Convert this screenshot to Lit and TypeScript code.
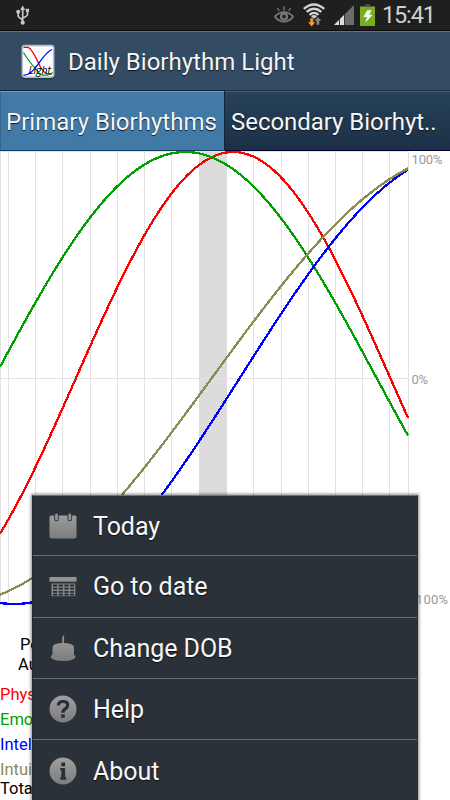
import { LitElement, html, svg, css } from "lit";
import { customElement, state } from "lit/decorators.js";
import { classMap } from "lit/directives/class-map.js";

const MIDDLE = 227;
const AMPLITUDE = 226;
const DAY = 27.33;
const END = 408.5;

interface Rhythm { color: string; days: number; zero: number; }

const RHYTHMS: Rhythm[] = [
  { color: "#ff0000", days: 23, zero: 76 },
  { color: "#00a000", days: 28, zero: -6 },
  { color: "#0000ff", days: 33, zero: 239.8 },
  { color: "#8c8c50", days: 38, zero: 211.8 },
];

const GRID = [0.5, 8.5, 35.5, 62.5, 90.5, 117.5, 144.5, 171.5, 253.5, 281.5, 308.5, 335.5, 362.5, 389.5, 408.5];

function curve(r: Rhythm): string {
  const pts: string[] = [];
  for (let x = 0; x <= END; x += 2) {
    const y = MIDDLE - AMPLITUDE * Math.sin(((x - r.zero) / (r.days * DAY)) * 2 * Math.PI);
    pts.push(`${x},${y.toFixed(2)}`);
  }
  return pts.join(" ");
}

@customElement("bio-status-bar")
class StatusBar extends LitElement {
  static styles = css`
    :host { display: flex; align-items: center; height: 31px; box-sizing: border-box; background: #1f1f1f; border-bottom: 1px solid #080808; color: #d0d0d0; font: 23.5px/31px Roboto, sans-serif; }
    svg { display: block; }
    .usb { margin-left: 15px; }
    .eye { margin-left: auto; }
    .wifi { margin-left: 9px; }
    .signal { margin-left: 9px; }
    .battery { margin-left: 6px; }
    .clock { width: 53px; margin: 0 15px 0 7px; white-space: nowrap; letter-spacing: -1.15px; }
  `;
  render() {
    return html`
      <svg class="usb" width="16" height="22" viewBox="0 0 16 22" fill="none" stroke="#c8c8c8" stroke-width="1.7">
        <path d="M7.7 4V18M3.2 8.5V12Q3.2 13.2 7.7 16M12.5 7V10.5Q12.5 12 7.7 14"/>
        <path d="M7.7 1.5L10.3 6H5.1Z M10.8 4.8h3.3v3.3h-3.3Z" fill="#c8c8c8" stroke="none"/>
        <circle cx="3.2" cy="7.8" r="2" fill="#c8c8c8" stroke="none"/><circle cx="7.7" cy="18.7" r="2.1" fill="#c8c8c8" stroke="none"/>
      </svg>
      <svg class="eye" width="20" height="18" viewBox="0 0 20 18" fill="none" stroke="#777" stroke-width="1.8">
        <path d="M.8 10.6Q5 6.2 10 6.2T19.2 10.6Q15 15.6 10 15.6T.8 10.6Z"/>
        <path d="M10 4.5V.5M5.3 5L3.4 2M14.7 5L16.6 2" stroke-width="1.4"/>
        <circle cx="10" cy="10.6" r="3" stroke-width="2.2"/>
      </svg>
      <svg class="wifi" width="22" height="24" viewBox="0 0 22 24" fill="none" stroke="#d4d4d4" stroke-width="2.3">
        <path d="M.8 5.8Q11-2.9 21.2 5.8M3.7 8.9Q11 2.6 18.3 8.9M6.5 11.9Q11 7.8 15.5 11.9"/>
        <path d="M8 13.2Q11 10.8 14 13.2L11 16Z" fill="#d4d4d4" stroke="none"/>
        <path d="M7 15h3.4v4h2.2L8.7 23.7 4.8 19H7Z" fill="#eda034" stroke="#1f1f1f" stroke-width=".5"/>
        <path d="M13.2 22v-4H11l3.9-4.2 3.9 4.2h-2.2v4Z" fill="#858585" stroke="#1f1f1f" stroke-width=".5"/>
      </svg>
      <svg class="signal" width="20" height="20" viewBox="0 0 20 20"><path d="M0 20L20 0V20Z" fill="#6c6c6c"/><path d="M0 20L5 15V20Z M6 20V14l4-4V20Z" fill="#dedede"/><path d="M5.5 14V20M10.5 9V20" stroke="#333"/></svg>
      <svg class="battery" width="15" height="22" viewBox="0 0 15 22"><path d="M5 0h5.5v2H15v3H0V2h5Z" fill="#454545"/><path d="M0 2.7H15V22H0Z" fill="#78ad1b"/><path d="M7.2 6.2h4.4L9.2 10.7h3.5L5.3 18.8l1.6-5.9H3.3Z" fill="#f4f4f4"/></svg>
      <span class="clock">15:41</span>`;
  }
}

@customElement("bio-header")
class Header extends LitElement {
  static styles = css`
    :host { display: flex; align-items: center; height: 59px; box-sizing: border-box; border-top: 1px solid #5e7489; background: #344c63; color: #f5f5f5; font: 24px/28px Roboto, sans-serif; text-shadow: 0 1px 1px #0b1721; }
    svg { display: block; margin: 1px 0 0 20px; flex: none; }
    .title { margin: 2px 0 0 12px; white-space: nowrap; letter-spacing: 0.01px; }
    .mark { font: italic 10.5px "Open Sans", sans-serif; text-shadow: none; }
  `;
  render() {
    return html`
      <svg width="36" height="36" viewBox="0 0 36 36" fill="none">
        <rect x="1.5" y="2.5" width="33" height="33" rx="3" fill="#1c2e3f" opacity=".6"/>
        <rect x="2.3" y="1.6" width="31.4" height="31.5" rx="2.5" fill="#fff" stroke="#b8bec4" stroke-width="1.6"/>
        <path d="M3.5 3.4H8C13 5 17 17 21 24S29 30 32 30" stroke="#f00018" stroke-width="1.3"/>
        <path d="M3.5 8.5C9 18 15 24 18 28Q21 32 27 31T32 28" stroke="#00a52e" stroke-width="1.3"/>
        <path d="M3.5 31C15 32 21 10 32 5.5" stroke="#0008ff" stroke-width="1.3"/>
        <text class="mark" x="8.5" y="29.5" textLength="22.5" fill="#000">Light</text>
      </svg>
      <span class="title">Daily Biorhythm Light</span>`;
  }
}

@customElement("bio-tabs")
class Tabs extends LitElement {
  @state() private active = 0;
  static styles = css`
    :host { display: flex; height: 61px; font: 24px/59px Roboto, sans-serif; color: #f5f5f5; text-shadow: 0 1px 1px #0b1721; }
    .tab { box-sizing: border-box; width: 225px; padding: 2px 0 0 6px; background: linear-gradient(#274259, #1b3047); border-top: 1px solid #18303f; border-bottom: 1px solid #020233; white-space: nowrap; overflow: hidden; box-shadow: inset 0 1px #48606e; letter-spacing: 0.02px; }
    .active { background: #427aa7; border-color: #144060; border-right: 1px solid #102536; border-top-color: #102536; box-shadow: inset 0 1px #6f9dbb, inset 1px 0 #34668e; }
    .tab:not(.active) { letter-spacing: -0.04px; }
  `;
  render() {
    return ["Primary Biorhythms", "Secondary Biorhyt.."].map((label, i) => html`
      <div class=${classMap({ tab: true, active: i === this.active })} @click=${() => (this.active = i)}>${label}</div>`);
  }
}

@customElement("bio-chart")
class Chart extends LitElement {
  static styles = css`
    :host { display: block; height: 454px; }
    svg { display: block; }
    .label { font: 13px Roboto, sans-serif; fill: #999; }
  `;
  render() {
    return html`<svg width="450" height="454" viewBox="0 0 450 454" fill="none">
      <rect x="199" y="0" width="28" height="454" fill="#dcdcdc"/>
      ${GRID.map((x) => svg`<path d="M${x} 0V454" stroke="#e2e2e2"/>`)}
      <path d="M0 .5H409M0 227.5H409M0 453.5H409" stroke="#e2e2e2"/>
      ${RHYTHMS.map((r) => svg`<polyline points=${curve(r)} stroke=${r.color} stroke-width="2.3" shape-rendering="crispEdges"/>`)}
      <text class="label" x="411.5" y="13" textLength="31">100%</text>
      <text class="label" x="411.5" y="233" textLength="16.5">0%</text>
      <text class="label" x="412" y="453" textLength="36">-100%</text>
    </svg>`;
  }
}

@customElement("bio-readout")
class Readout extends LitElement {
  static styles = css`
    :host { display: flex; flex-direction: column; height: 195px; overflow: hidden; padding-top: 30px; box-sizing: border-box; font: 16.5px/20px Roboto, sans-serif; color: #000; white-space: nowrap; }
    .period { padding-left: 20px; }
    .date { padding-left: 18px; margin-bottom: 7px; }
    .row { height: 25px; line-height: 24px; flex: none; }
    .red { color: #f00; margin-top: 1px; }
    .green { color: #00a000; }
    .blue { color: #00f; }
    .olive { color: #8c8c50; height: 21px; }
    .total { height: 20px; line-height: 19px; }
  `;
  render() {
    return html`
      <div class="period">Period</div><div class="date">August</div>
      <div class="row red">Physical</div><div class="row green">Emotional</div>
      <div class="row blue">Intellectual</div><div class="row olive">Intuitive</div>
      <div class="row total">Total</div>`;
  }
}

const gradient = svg`<defs><linearGradient id="g" x1="0" y1="0" x2="0" y2="28" gradientUnits="userSpaceOnUse"><stop stop-color="#a0a0a0"/><stop offset="1" stop-color="#7c7c7c"/></linearGradient></defs>`;

const ITEMS = [
  { label: "Today", icon: svg`<path d="M2 3.5H26Q27.5 3.5 27.5 5V24.5Q27.5 26.5 25.5 26.5H2.5Q.5 26.5 .5 24.5V5Q.5 3.5 2 3.5Z" fill="url(#g)"/><path d="M7.5 3V7M20.8 3V7" stroke="#2a3138" stroke-width="4.6" stroke-linecap="round"/><path d="M7.5 3V7M20.8 3V7" stroke="#939393" stroke-width="2.8" stroke-linecap="round"/>` },
  { label: "Go to date", icon: svg`<path d="M.5 5H27.5V9.7H.5Z" fill="#929292"/><path d="M2.5 11.5H26.3V24.2H2.5Z" fill="#858585"/><path d="M4 13.5H25M4 16.7H25M4 19.8H25M4 22.6H25" stroke="#252d34" stroke-width="1.8" stroke-dasharray="4.2 1.5"/>` },
  { label: "Change DOB", icon: svg`<path d="M13 12V4.6Q13 2.8 14.8 .8Q15.8 3.8 15 5.2V12Z" fill="#888"/><path d="M3.5 13.5Q3.5 9 14.2 9T25 13.5V20.5Q26.5 21.5 26.5 23.3Q25 27 14.2 27T1.7 23.3Q1.7 21.5 3.5 20.5Z" fill="url(#g)"/><path d="M3.7 21Q6 23 14 23T24.8 21" stroke="#777" stroke-width=".6"/>` },
  { label: "Help", icon: svg`<circle cx="14" cy="14" r="13.5" fill="url(#g)"/><path d="M9.3 10.5Q9.5 6.5 14.1 6.5T18.7 10.1Q18.7 12.2 16.2 13.8T14 17.7" stroke="#272f36" stroke-width="3.2"/><rect x="12.2" y="19.5" width="3.6" height="3.3" fill="#272f36"/>` },
  { label: "About", icon: svg`<circle cx="14" cy="14" r="13.5" fill="url(#g)"/><path d="M12.3 5.5H16.1V9.2H12.3ZM11.2 11H16.1V20.3H17.2V22.7H11.2V20.3H12.3V13.2H11.2Z" fill="#272f36"/>` },
];

@customElement("bio-menu")
class Menu extends LitElement {
  static styles = css`
    :host { display: block; box-sizing: border-box; background: #2b3138; color: #f7f7f7; border: 1px solid #252a2e; border-bottom: 0; border-top-color: #707578; box-shadow: 0 0 3px 1px rgba(0, 0, 0, .45); font: 25px/30px Roboto, sans-serif; }
    .item { display: flex; align-items: center; height: 61.3px; box-sizing: border-box; border-bottom: 1px solid #6a7075; padding: 0 0 0 16px; text-shadow: 0 1px 1px #0b0e12; }
    .item:first-child { height: 60.3px; }
    .item:last-child { border: 0; }
    .icon { display: block; width: 28px; height: 28px; flex: none; }
    .text { margin: 2px 0 0 16px; white-space: nowrap; letter-spacing: -0.05px; }
  `;
  render() {
    return ITEMS.map((item) => html`<div class="item">
      <svg class="icon" viewBox="0 0 28 28" fill="none">${gradient}${item.icon}</svg>
      <span class="text">${item.label}</span></div>`);
  }
}

@customElement("app-root")
class AppRoot extends LitElement {
  static styles = css`
    :host { display: block; position: relative; width: 450px; height: 800px; overflow: hidden; background: #fff; }
    .menu { position: absolute; left: 32px; top: 495px; width: 386px; height: 306px; }
  `;
  render() {
    return html`
      <bio-status-bar></bio-status-bar>
      <bio-header></bio-header>
      <bio-tabs></bio-tabs>
      <bio-chart></bio-chart>
      <bio-readout></bio-readout>
      <bio-menu class="menu"></bio-menu>`;
  }
}
